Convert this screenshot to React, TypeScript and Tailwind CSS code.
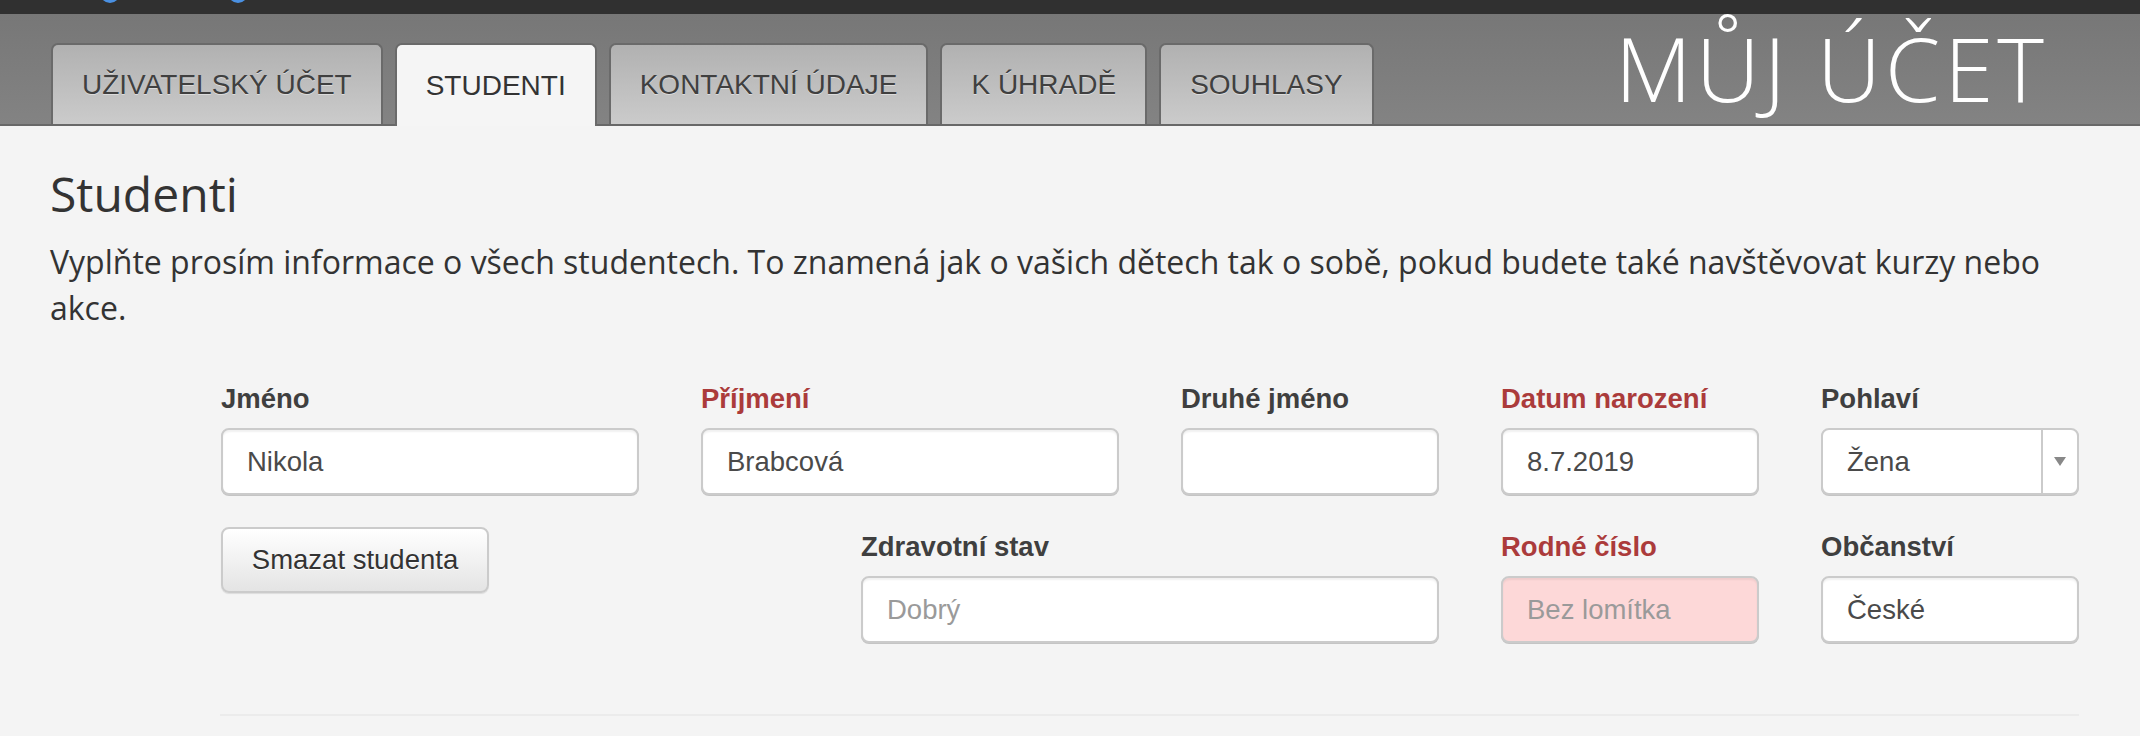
import React from 'react';

const tabs = ['Uživatelský účet', 'Studenti', 'Kontaktní údaje', 'K úhradě', 'Souhlasy'];

function Field({
  label,
  required,
  value,
  placeholder,
  className,
  pink,
}: {
  label: string;
  required?: boolean;
  value?: string;
  placeholder?: string;
  className?: string;
  pink?: boolean;
}) {
  return (
    <div className={className}>
      <div
        className={`text-[27.5px] font-bold leading-[40px] mb-[9px] ${
          required ? 'text-[#ab3b3b]' : 'text-[#3f3f3f]'
        }`}
      >
        {label}
      </div>
      <div
        className={`h-[67px] rounded-[8px] border-2 border-[#cbcbcb] flex items-center px-[24px] text-[27.5px] shadow-[inset_0_2px_2px_rgba(0,0,0,0.06),0_1px_0_#c4c4c4] ${
          pink ? 'bg-[#fdd8d8]' : 'bg-white'
        }`}
      >
        {value ? (
          <span className="text-[#4a4a4a]">{value}</span>
        ) : (
          <span className="text-[#9a9a9a]">{placeholder}</span>
        )}
      </div>
    </div>
  );
}

export default function App() {
  return (
    <div className="w-full min-h-[736px] bg-[#f4f4f4] font-['Liberation_Sans',Arial,sans-serif]">
      {/* top strip */}
      <div className="h-[14px] bg-[#303030] flex gap-[108px] pl-[100px] overflow-hidden relative z-20">
        <div className="w-[20px] h-[20px] -mt-[17px] rounded-full bg-[#4a90e2]" />
        <div className="w-[20px] h-[20px] -mt-[17px] rounded-full bg-[#4a90e2]" />
      </div>

      {/* header */}
      <div className="h-[112px] border-b-2 border-[#686868] bg-gradient-to-b from-[#777777] to-[#838383] flex justify-between pl-[51px] pr-[92px]">
        <div className="flex items-end gap-[12px]">
          {tabs.map((t, i) => {
            const active = i === 1;
            return (
              <div
                key={t}
                className={`flex items-center px-[29px] border-2 border-b-0 rounded-t-[7px] text-[28px] uppercase [text-shadow:0_1px_0_rgba(255,255,255,0.45)] ${
                  active
                    ? 'h-[83px] relative top-[2px] z-10 bg-[#f5f5f5] border-[#6a6a6a] text-[#333]'
                    : 'h-[81px] bg-gradient-to-b from-[#b1b1b1] to-[#cbcbcb] border-[#6a6a6a] text-[#404040]'
                }`}
              >
                {t}
              </div>
            );
          })}
        </div>
        <div className="self-start mt-[9px] text-white text-[89px] leading-none font-extralight font-['Open_Sans',sans-serif] tracking-[4px] whitespace-nowrap">
          MŮJ ÚČET
        </div>
      </div>

      {/* content */}
      <div className="px-[50px] pt-[39px]">
        <h1 className="text-[48px] leading-[58px] text-[#333] font-['Open_Sans',sans-serif] font-normal">
          Studenti
        </h1>
        <p className="mt-[16px] text-[32px] leading-[46px] text-[#333] font-['Open_Sans',sans-serif]">
          Vyplňte prosím informace o všech studentech. To znamená jak o vašich dětech tak o sobě, pokud budete také
          navštěvovat kurzy nebo akce.
        </p>

        <div className="ml-[171px] w-[1858px] mt-[48px] grid grid-cols-12 gap-x-[62px] gap-y-[32px]">
          <Field className="col-span-3" label="Jméno" value="Nikola" />
          <Field className="col-span-3" label="Příjmení" required value="Brabcová" />
          <Field className="col-span-2" label="Druhé jméno" />
          <Field className="col-span-2" label="Datum narození" required value="8.7.2019" />
          <div className="col-span-2">
            <div className="text-[27.5px] font-bold leading-[40px] mb-[9px] text-[#3f3f3f]">Pohlaví</div>
            <div className="h-[67px] rounded-[8px] border-2 border-[#cbcbcb] bg-white flex shadow-[0_1px_0_#c4c4c4]">
              <div className="flex-1 flex items-center px-[24px] text-[27.5px] text-[#4a4a4a]">Žena</div>
              <div className="w-[36px] border-l-2 border-[#cbcbcb] flex items-center justify-center">
                <svg width="12" height="9" viewBox="0 0 12 9">
                  <path d="M0 0 L12 0 L6 9 Z" fill="#888" />
                </svg>
              </div>
            </div>
          </div>

          <div className="col-span-3">
            <button className="h-[66px] w-[268px] rounded-[8px] border-2 border-[#cbcbcb] bg-gradient-to-b from-white to-[#e4e4e4] text-[27.5px] text-[#333] [text-shadow:0_1px_0_#fff] shadow-[0_1px_1px_rgba(0,0,0,0.1)]">
              Smazat studenta
            </button>
          </div>
          <Field className="col-span-4 col-start-5" label="Zdravotní stav" placeholder="Dobrý" />
          <Field className="col-span-2" label="Rodné číslo" required placeholder="Bez lomítka" pink />
          <Field className="col-span-2" label="Občanství" value="České" />
        </div>

        <div className="ml-[170px] w-[1859px] mt-[71px] h-[2px] bg-[#ebebeb]" />
      </div>
    </div>
  );
}
